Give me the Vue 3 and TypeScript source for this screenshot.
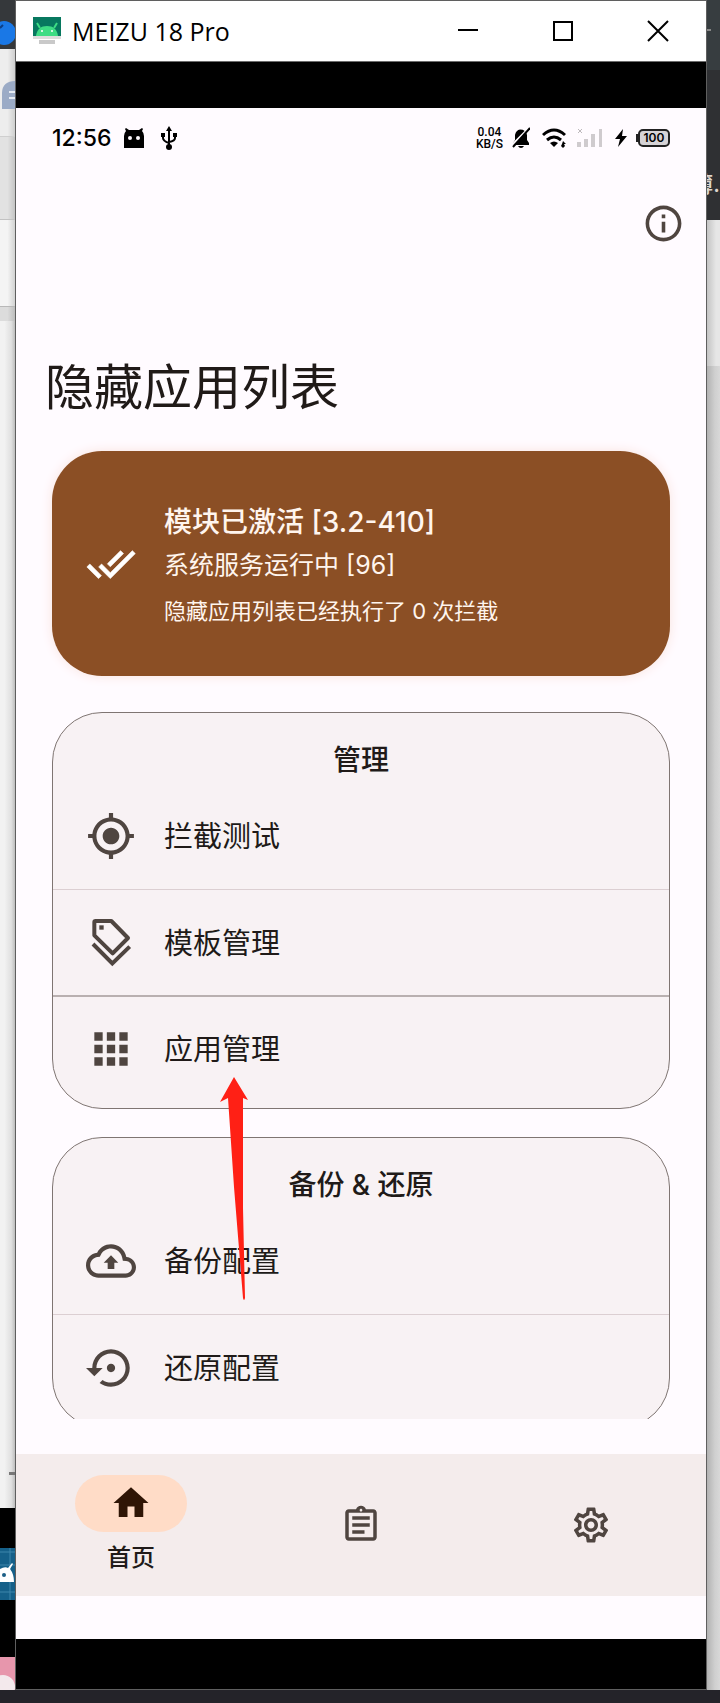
<script setup lang="ts">
import { ref } from 'vue'

interface MenuItem {
  id: string
  label: string
  icon: 'target' | 'tags' | 'apps' | 'cloud' | 'restore'
}

interface MenuGroup {
  title: string
  items: MenuItem[]
}

const groups: MenuGroup[] = [
  {
    title: '管理',
    items: [
      { id: 'test', label: '拦截测试', icon: 'target' },
      { id: 'template', label: '模板管理', icon: 'tags' },
      { id: 'apps', label: '应用管理', icon: 'apps' },
    ],
  },
  {
    title: '备份 & 还原',
    items: [
      { id: 'backup', label: '备份配置', icon: 'cloud' },
      { id: 'restore', label: '还原配置', icon: 'restore' },
    ],
  },
]

const iconPaths: Record<string, string> = {
  target:
    'M12 8c-2.21 0-4 1.79-4 4s1.79 4 4 4 4-1.79 4-4-1.79-4-4-4zm8.94 3c-.46-4.17-3.77-7.48-7.94-7.94V1h-2v2.06C6.83 3.52 3.52 6.83 3.06 11H1v2h2.06c.46 4.17 3.77 7.48 7.94 7.94V23h2v-2.06c4.17-.46 7.48-3.77 7.94-7.94H23v-2h-2.06zM12 19c-3.87 0-7-3.13-7-7s3.13-7 7-7 7 3.13 7 7-3.13 7-7 7z',
  apps: 'M4 8h4V4H4v4zm6 12h4v-4h-4v4zm-6 0h4v-4H4v4zm0-6h4v-4H4v4zm6 0h4v-4h-4v4zm6-10v4h4V4h-4zm-6 4h4V4h-4v4zm6 6h4v-4h-4v4zm0 6h4v-4h-4v4z',
  cloud:
    'M19.35 10.04C18.67 6.59 15.64 4 12 4 9.11 4 6.6 5.64 5.35 8.04 2.34 8.36 0 10.91 0 14c0 3.31 2.69 6 6 6h13c2.76 0 5-2.24 5-5 0-2.64-2.05-4.78-4.65-4.96zM19 18H6c-2.21 0-4-1.79-4-4 0-2.05 1.53-3.76 3.56-3.97l1.07-.11.5-.95C8.08 7.14 9.94 6 12 6c2.62 0 4.88 1.86 5.39 4.43l.3 1.5 1.53.11c1.56.1 2.78 1.41 2.78 2.96 0 1.65-1.35 3-3 3zM8.5 12.8h1.9v3h3.2v-3h1.9L12 9.2z',
  restore:
    'M14 12c0-1.1-.9-2-2-2s-2 .9-2 2 .9 2 2 2 2-.9 2-2zm-2-9c-4.97 0-9 4.03-9 9H0l4 4 4-4H5c0-3.87 3.13-7 7-7s7 3.13 7 7-3.13 7-7 7c-1.51 0-2.91-.49-4.06-1.3l-1.42 1.44C8.04 20.3 9.94 21 12 21c4.97 0 9-4.03 9-9s-4.03-9-9-9z',
}

const tab = ref<'home' | 'log' | 'settings'>('home')
</script>

<template>
  <div class="desktop">
    <div class="edge edge-left" aria-hidden="true">
      <div class="l-dark">
        <svg width="15" height="48" viewBox="0 0 15 48"><circle cx="4" cy="33" r="12" fill="#1a78e6" /><path d="M0 28l3-3" stroke="#0d3f86" stroke-width="2" /></svg>
      </div>
      <div class="l-tab">
        <svg width="15" height="87" viewBox="0 0 15 87"><path d="M2 60V44c0-8 5-12 13-12v28z" fill="#9babc6" /><path d="M9 43h6M9 49h6" stroke="#e6ebf3" stroke-width="2" /></svg>
      </div>
      <div class="l-grey"></div>
      <div class="l-light"></div>
      <div class="l-gap"></div>
      <div class="l-page"><span class="dash"></span></div>
      <div class="l-black"></div>
      <div class="l-blue">
        <svg width="15" height="52" viewBox="0 0 15 52"><path d="M0 4h15M0 17h15M0 44h15M10 0v52" stroke="#3f86ab" /><path d="M0 34V21q5-3 8-1l4-5 1 1-3 5q4 5 4 13z" fill="#fff" /><circle cx="4" cy="27" r="2" fill="#1c5f86" /></svg>
      </div>
      <div class="l-black tall"></div>
      <div class="l-pink">
        <svg width="15" height="33" viewBox="0 0 15 33"><circle cx="3" cy="30" r="12" fill="#f3e9ec" /></svg>
      </div>
    </div>

    <div class="window">
      <header class="titlebar">
        <svg class="app-icon" width="30" height="28" viewBox="0 0 30 28" aria-hidden="true">
          <path d="M1 0h28v20H1z" fill="#07785f" />
          <path d="M1 19h28v3H1z" fill="#dcdcdc" />
          <path d="M7 23h16v4H7z" fill="#c9c9c9" />
          <path d="M4 19c1-7 5-10 11-10s10 3 11 10z" fill="#3ddc84" />
          <path d="M8 11L5 6M22 11l3-5" stroke="#3ddc84" stroke-width="2" />
          <circle cx="10" cy="14" r="1" fill="#fff" /><circle cx="20" cy="14" r="1" fill="#fff" />
        </svg>
        <span class="win-title">MEIZU 18 Pro</span>
        <button class="win-btn" type="button" aria-label="最小化">
          <svg width="22" height="22" viewBox="0 0 22 22"><path d="M1 10h20" stroke="#000" stroke-width="2" /></svg>
        </button>
        <button class="win-btn" type="button" aria-label="最大化">
          <svg width="22" height="22" viewBox="0 0 22 22"><path d="M2 2h18v18H2z" fill="none" stroke="#000" stroke-width="2" /></svg>
        </button>
        <button class="win-btn" type="button" aria-label="关闭">
          <svg width="22" height="22" viewBox="0 0 22 22"><path d="M1 1l20 20M21 1L1 21" stroke="#000" stroke-width="2" /></svg>
        </button>
      </header>
      <div class="bezel-top"></div>

      <main class="app">
        <div class="status">
          <span class="clock">12:56</span>
          <svg class="s-droid" width="22" height="20" viewBox="0 0 22 20" aria-hidden="true">
            <path d="M1 20V8q0-3 2-5L2 1l1-1 3 2h10l3-2 1 1-1 2q2 2 2 5v12z" />
            <circle cx="7" cy="10" r="2" fill="#fffbff" /><circle cx="15" cy="10" r="2" fill="#fffbff" />
          </svg>
          <svg class="s-usb" width="16" height="24" viewBox="0 0 16 24" aria-hidden="true">
            <path d="M8 3v18M2 9v3q0 3 6 5M14 9v3q0 3-6 4" fill="none" stroke="#000" stroke-width="2" />
            <path d="M8 0l3 5H5zM0 7h4v4H0zM12 7h4v4h-4z" /><circle cx="8" cy="21" r="3" />
          </svg>
          <span class="spacer"></span>
          <span class="speed"><span>0.04</span><span>KB/S</span></span>
          <svg class="s-bell" width="18" height="22" viewBox="0 0 18 22" aria-hidden="true">
            <path d="M1 18v-2l2-3V8q1-5 5-5.500q6 0 7 5.500v5l2 3v2zM6 19h6q-1 2-3 2t-3-2z" />
            <path d="M0 18L17 1" stroke="#fffbff" stroke-width="2" /><path d="M1 20L18 1" stroke="#000" stroke-width="2" />
          </svg>
          <svg class="s-wifi" width="25" height="20" viewBox="0 0 25 20" aria-hidden="true">
            <path d="M1 7q11-10 22 0M5 12q7-6 14 0" fill="none" stroke="#000" stroke-width="3" />
            <path d="M8 15q4-3 8 0l-4 4zM21 13l3 3h-2l1 2-2 2-2-2 1-2z" />
          </svg>
          <svg class="s-signal" width="26" height="20" viewBox="0 0 26 20" aria-hidden="true" fill="#cfcbce">
            <path d="M0 14h4v5H0zM7 11h4v8H7zM14 6h4v13h-4zM22 1h3v18h-3z" /><path d="M1 1l4 4M5 1L1 5" stroke="#bdb9bc" />
          </svg>
          <svg class="s-bolt" width="12" height="18" viewBox="0 0 12 18" aria-hidden="true"><path d="M8 0L0 10h5L3 18l9-11H7z" /></svg>
          <span class="battery-tip" aria-hidden="true"></span>
          <span class="battery">100</span>
        </div>

        <div class="appbar">
          <button class="info" type="button" aria-label="关于">
            <svg width="43" height="43" viewBox="0 0 24 24" fill="#4f4540"><path d="M11 7h2v2h-2zm0 4h2v6h-2zm1-9C6.480 2 2 6.480 2 12s4.480 10 10 10 10-4.480 10-10S17.520 2 12 2zm0 18c-4.410 0-8-3.590-8-8s3.590-8 8-8 8 3.590 8 8-3.590 8-8 8z" /></svg>
          </button>
        </div>

        <div class="scroll">
          <h1>隐藏应用列表</h1>

          <section class="banner">
            <svg width="50" height="50" viewBox="0 0 24 24" fill="#fff" stroke="#fff" stroke-width=".3" aria-hidden="true"><path d="M18 7l-1.410-1.410-6.340 6.340 1.410 1.410L18 7zm4.240-1.410L11.660 16.170 7.480 12l-1.410 1.410L11.660 19l12-12-1.420-1.410zM.410 13.410L6 19l1.410-1.410L1.830 12 .410 13.410z" /></svg>
            <div class="banner-text">
              <strong>模块已激活 [3.2-410]</strong>
              <p class="service">系统服务运行中 [96]</p>
              <p class="count">隐藏应用列表已经执行了 0 次拦截</p>
            </div>
          </section>

          <section v-for="group in groups" :key="group.title" class="card">
            <h2>{{ group.title }}</h2>
            <button v-for="item in group.items" :key="item.id" class="row" type="button">
              <svg v-if="item.icon === 'tags'" width="50" height="50" viewBox="0 0 150 150" fill="none" stroke="#4f4540" stroke-width="12" aria-hidden="true">
                <path d="M29 9h47l50 51-46 46-55-54V13q0-4 4-4z" stroke-linejoin="round" />
                <path d="M21 78l58 58 52-50" />
                <rect x="40" y="22" width="13" height="13" fill="#4f4540" stroke="none" />
              </svg>
              <svg v-else width="50" height="50" viewBox="0 0 24 24" fill="#4f4540" aria-hidden="true"><path :d="iconPaths[item.icon]" /></svg>
              <span>{{ item.label }}</span>
            </button>
          </section>
        </div>

        <nav class="tabs">
          <button type="button" class="tab" :aria-current="tab === 'home' ? 'page' : undefined" @click="tab = 'home'">
            <span class="pill"><svg width="42" height="42" viewBox="0 0 24 24" fill="#2f1505" aria-hidden="true"><path d="M10 20v-6h4v6h5v-8h3L12 3 2 12h3v8z" /></svg></span>
            <span class="tab-label">首页</span>
          </button>
          <button type="button" class="tab" aria-label="日志" @click="tab = 'log'">
            <svg width="42" height="42" viewBox="0 0 24 24" fill="#4f4540" aria-hidden="true"><path d="M7 15h7v2H7zm0-4h10v2H7zm0-4h10v2H7zm12-4h-4.180C14.400 1.840 13.300 1 12 1c-1.300 0-2.400.840-2.820 2H5c-1.100 0-2 .900-2 2v14c0 1.100.900 2 2 2h14c1.100 0 2-.900 2-2V5c0-1.100-.900-2-2-2zm-7-.250c.410 0 .750.340.750.750s-.340.750-.750.750-.750-.340-.750-.750.340-.750.750-.750zM19 19H5V5h14v14z" /></svg>
          </button>
          <button type="button" class="tab" aria-label="设置" @click="tab = 'settings'">
            <svg width="42" height="42" viewBox="0 0 24 24" fill="#4f4540" aria-hidden="true"><path d="M19.430 12.980c.040-.320.070-.640.070-.980s-.030-.660-.070-.980l2.110-1.650c.190-.150.240-.420.120-.640l-2-3.460c-.090-.160-.260-.250-.440-.250-.060 0-.120.010-.170.030l-2.490 1c-.520-.400-1.080-.730-1.690-.980l-.380-2.650C14.460 2.180 14.250 2 14 2h-4c-.250 0-.460.180-.490.420l-.380 2.650c-.610.250-1.170.590-1.690.980l-2.490-1c-.060-.020-.120-.030-.180-.030-.170 0-.340.090-.430.250l-2 3.460c-.130.220-.070.490.120.640l2.110 1.650c-.040.320-.070.650-.070.980s.030.660.070.980l-2.110 1.650c-.190.150-.240.420-.120.640l2 3.460c.090.160.260.250.440.250.060 0 .120-.010.170-.030l2.490-1c.520.400 1.080.730 1.690.980l.380 2.650c.030.240.240.420.490.420h4c.250 0 .460-.180.490-.420l.380-2.650c.610-.250 1.170-.590 1.690-.980l2.490 1c.060.020.120.030.180.030.170 0 .340-.090.430-.250l2-3.460c.120-.220.070-.490-.120-.640l-2.110-1.650zm-1.980-1.710c.040.310.050.520.050.730 0 .210-.020.430-.050.730l-.140 1.130.890.700 1.080.840-.700 1.210-1.270-.510-1.040-.420-.900.680c-.430.320-.840.560-1.250.730l-1.060.430-.160 1.130-.200 1.350h-1.400l-.190-1.350-.160-1.130-1.060-.430c-.430-.180-.830-.410-1.230-.710l-.910-.700-1.060.430-1.270.510-.700-1.210 1.080-.840.890-.700-.140-1.130c-.030-.310-.050-.540-.050-.740s.020-.430.050-.730l.140-1.130-.890-.700-1.080-.840.700-1.210 1.270.510 1.040.420.900-.680c.430-.320.840-.560 1.250-.730l1.060-.430.160-1.130.200-1.350h1.390l.190 1.350.160 1.130 1.060.430c.430.180.830.410 1.230.710l.910.700 1.060-.430 1.270-.510.700 1.210-1.070.850-.890.700.140 1.130zM12 8c-2.210 0-4 1.790-4 4s1.790 4 4 4 4-1.790 4-4-1.790-4-4-4zm0 6c-1.100 0-2-.900-2-2s.900-2 2-2 2 .900 2 2-.900 2-2 2z" /></svg>
          </button>
        </nav>

        <svg class="pointer" width="28" height="225" viewBox="0 0 28 225" aria-hidden="true"><path d="M14 0l14 23-5-2v110l2 90q-1 4-2 0L14 110 8 21l-8 4z" fill="#ff2015" /></svg>
      </main>
      <div class="bezel-bottom"></div>
    </div>

    <div class="edge edge-right" aria-hidden="true">
      <div class="r-top"><span></span></div>
      <div class="r-dark">薄.</div>
      <div class="r-light"></div>
      <div class="r-page"></div>
    </div>
    <div class="taskbar"></div>
  </div>
</template>

<style>
body {
  margin: 0;
  background: #242329;
}
</style>

<style scoped>
* {
  box-sizing: border-box;
}
button {
  border: 0;
  margin: 0;
  padding: 0;
  background: none;
  font: inherit;
  color: inherit;
  cursor: pointer;
}
svg {
  display: block;
  flex: none;
}
.desktop {
  display: grid;
  grid-template-columns: 15px minmax(0, 1fr) 13px;
  grid-template-rows: minmax(0, 1fr) 13px;
  height: 100vh;
  font-family: Inter, Roboto, "Noto Sans CJK SC", sans-serif;
  color: #201a18;
}
.taskbar {
  grid-column: 1 / -1;
  background: #242329;
}
.edge {
  display: flex;
  flex-direction: column;
  overflow: hidden;
}
.l-dark { height: 49px; background: #35383b; }
.l-tab { height: 87px; background: linear-gradient(90deg, #ededed 50%, #cfcfcf); }
.l-grey { height: 83px; background: linear-gradient(90deg, #e2e2e2 50%, #c4c4c4); border-top: 1px solid #cfcfcf; }
.l-light { height: 87px; background: linear-gradient(90deg, #f4f4f4 50%, #d2d2d2); border-top: 1px solid #c2c2c2; }
.l-gap { height: 15px; background: linear-gradient(90deg, #dcdcdc 50%, #bdbdbd); border-top: 1px solid #b8b8b8; }
.l-page {
  flex: 1;
  display: flex;
  align-items: flex-end;
  justify-content: flex-end;
  padding-bottom: 33px;
  background: linear-gradient(90deg, #f2f2f2 30%, #e0e0e0 75%, #bebebe);
}
.dash { width: 6px; height: 3px; background: #777; }
.l-black { height: 40px; background: #000; }
.l-black.tall { height: 57px; }
.l-blue { height: 52px; background: #156089; }
.l-pink { height: 33px; background: #e796ac; }
.r-top {
  height: 70px;
  padding-top: 29px;
  background: #373d40;
}
.r-top span { display: block; width: 4px; height: 2px; background: #888; }
.r-dark {
  display: flex;
  justify-content: flex-end;
  height: 150px;
  padding-top: 100px;
  background: #2f3033;
  color: #ddd5ce;
  font-size: 22px;
  font-weight: 500;
  line-height: 28px;
  white-space: nowrap;
}
.r-light { height: 146px; background: linear-gradient(90deg, #c4c4c4, #e6e6e6 70%); }
.r-page { flex: 1; background: linear-gradient(90deg, #b2b2b2, #cfcfcf 60%, #d8d8d8); }

.window {
  display: flex;
  flex-direction: column;
  min-height: 0;
  border: 1px solid #5f5f5f;
}
.titlebar {
  display: flex;
  align-items: center;
  height: 60px;
  padding-left: 16px;
  background: #fff;
}
.win-title {
  flex: 1;
  margin-left: 10px;
  font-family: "Open Sans", "Noto Sans", sans-serif;
  font-size: 25px;
  line-height: 32px;
  color: #000;
}
.win-btn {
  display: flex;
  align-items: center;
  justify-content: center;
  width: 95px;
  height: 60px;
}
.win-btn:last-child { margin-right: 1px; }
.bezel-top {
  height: 47px;
  background: #000;
  border-top: 1px solid #6c6c6c;
}
.bezel-bottom {
  height: 50px;
  background: #000;
}
.app {
  position: relative;
  flex: 1;
  display: flex;
  flex-direction: column;
  min-height: 0;
  padding-bottom: 43px;
  background: #fffbff;
}
.status {
  display: flex;
  align-items: center;
  height: 60px;
  padding: 0 36px;
  color: #000;
}
.clock {
  font-size: 23px;
  font-weight: 500;
  line-height: 28px;
}
.spacer { flex: 1; }
.s-droid { margin-left: 12px; }
.s-usb { margin-left: 16px; }
.speed {
  display: flex;
  flex-direction: column;
  font-family: Roboto, sans-serif;
  font-size: 12px;
  font-weight: 500;
  line-height: 12px;
  text-align: center;
}
.s-bell { margin-left: 9px; }
.s-wifi { margin-left: 12px; }
.s-signal { margin-left: 10px; }
.s-bolt { margin-left: 12px; }
.battery-tip {
  width: 2px;
  height: 8px;
  margin-left: 9px;
  background: #222;
}
.battery {
  width: 32px;
  height: 18px;
  border: 2px solid #222;
  border-radius: 5px;
  background: #d6d3d6;
  font-size: 12px;
  font-weight: 600;
  line-height: 14px;
  text-align: center;
}
.appbar {
  display: flex;
  align-items: center;
  justify-content: flex-end;
  height: 110px;
  padding-right: 21px;
}
.scroll {
  flex: 1;
  min-height: 0;
  overflow-y: auto;
  scrollbar-width: none;
  margin-bottom: 35px;
  padding: 80px 36px 0;
}
h1 {
  margin: 0 -7px 33px;
  font-size: 49px;
  font-weight: 400;
  line-height: 60px;
}
.banner {
  display: flex;
  align-items: center;
  gap: 28px;
  height: 225px;
  padding: 0 34px;
  margin-bottom: 36px;
  border-radius: 50px;
  background: #8b4f25;
  color: #fff5ee;
  box-shadow: 0 0 12px #f9e4df;
}
.banner-text { padding-top: 2px; }
.banner-text strong {
  display: block;
  font-size: 28px;
  font-weight: 500;
  line-height: 42px;
}
.banner-text p { margin: 0; }
.banner-text .service {
  font-size: 25px;
  line-height: 44px;
}
.banner-text .count {
  margin-top: 6px;
  font-size: 22px;
  line-height: 36px;
}
.card {
  margin-bottom: 28px;
  padding-bottom: 7px;
  border: 1px solid #7f7572;
  border-radius: 50px;
  background: #f8f2f4;
}
h2 {
  margin: 0;
  padding-top: 24px;
  font-size: 28px;
  font-weight: 500;
  line-height: 46px;
  text-align: center;
}
.row {
  display: flex;
  align-items: center;
  gap: 28px;
  width: 100%;
  height: 106px;
  padding-left: 33px;
  font-size: 29px;
  line-height: 40px;
}
.row span { padding-top: 2px; }
.row + .row { border-top: 1px solid #dccfd2; }
.row + .row + .row { border-top: 2px solid #b9b0b0; }
.tabs {
  display: grid;
  grid-template-columns: repeat(3, 1fr);
  height: 142px;
  background: #f4ecec;
}
.tab {
  display: flex;
  flex-direction: column;
  align-items: center;
  justify-content: center;
}
.pill {
  display: flex;
  align-items: center;
  justify-content: center;
  width: 112px;
  height: 57px;
  border-radius: 29px;
  background: #ffdcc7;
}
.tab-label {
  margin-top: 8px;
  font-size: 24px;
  font-weight: 500;
  line-height: 36px;
}
.pointer {
  position: absolute;
  left: 204px;
  top: 969px;
  pointer-events: none;
}
</style>
